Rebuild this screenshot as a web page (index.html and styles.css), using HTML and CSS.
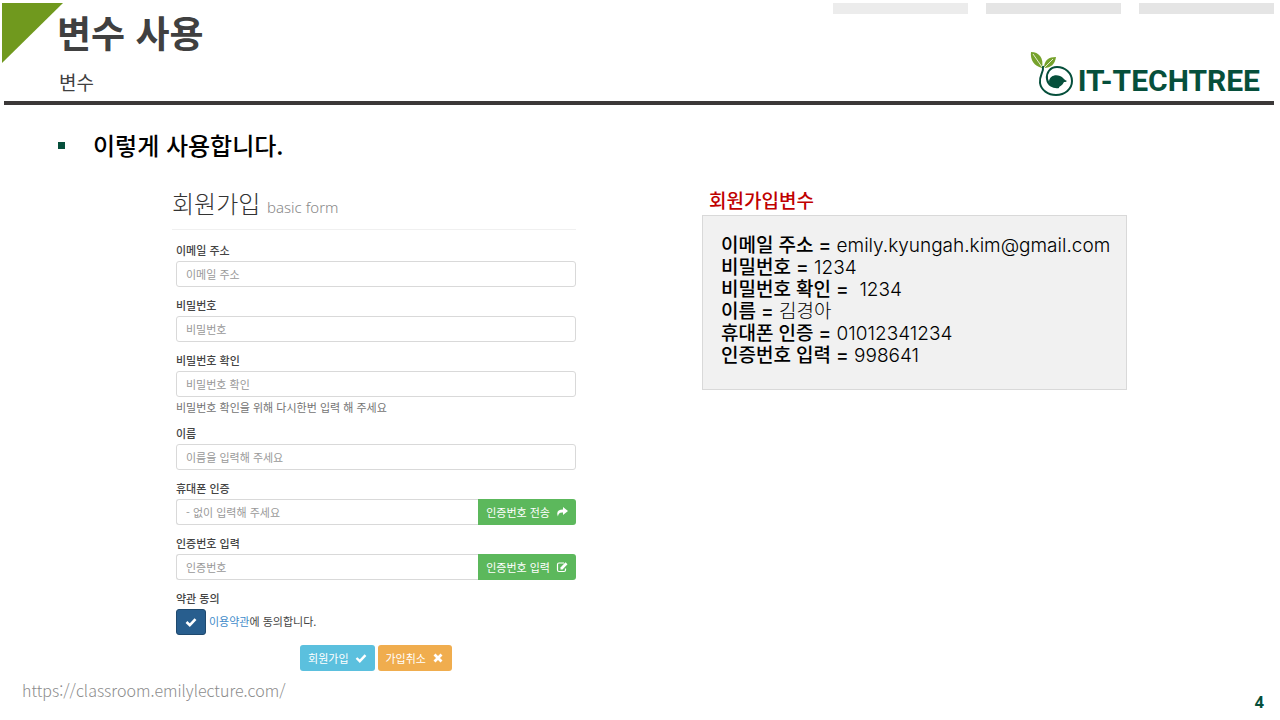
FILE: index.html
```html
<!DOCTYPE html>
<html lang="ko">

<head>
  <meta charset="UTF-8" />
  <meta name="viewport" content="width=device-width, initial-scale=1.0" />
  <title>변수 사용</title>
  <link rel="stylesheet" href="styles.css">
</head>

<body>
  <header class="slide-header">
    <div class="corner"></div>
    <div class="titles">
      <h1>변수 사용</h1>
      <p class="subtitle">변수</p>
    </div>
    <div class="brand">
      <div class="bars">
        <span class="bar bar-light"></span>
        <span class="bar"></span>
        <span class="bar"></span>
      </div>
      <div class="logo">
        <svg width="44" height="46" viewBox="0 0 44 46">
          <path d="M1 1C9 1 14 7 12 17C4 15 0 9 1 1Z" fill="#76a22c" />
          <path d="M14 17C14 9 19 6 26 6C25 13 21 17 14 17Z" fill="#76a22c" />
          <path d="M3 3L12 16M23 8L14 17" fill="none" stroke="#fff" stroke-width="0.8" />
          <path d="M13 15C14 22 9 24 10 32C11 39 18 44 26 44C35 44 42 38 42 30C42 22 35 16 27 16C20 16 16 22 17 28C18 34 23 37 29 36" fill="none" stroke="#064f3b" stroke-width="2" />
          <path d="M19 30C20 25 25 23 30 25C33 26 34 29 37 30C36 31 35 31 34 31C32 35 29 37 25 36C21 35 19 33 19 30Z" fill="#064f3b" />
        </svg>
        <span>IT-TECHTREE</span>
      </div>
    </div>
  </header>

  <main>
    <h2 class="bullet">이렇게 사용합니다.</h2>

    <div class="columns">
      <form class="join">
        <h3>회원가입 <small>basic form</small></h3>

        <div class="fields">
          <div class="group">
            <label for="email">이메일 주소</label>
            <input type="email" id="email" class="control" placeholder="이메일 주소" />
          </div>
          <div class="group">
            <label for="password">비밀번호</label>
            <input type="password" id="password" class="control" placeholder="비밀번호" />
          </div>
          <div class="group">
            <label for="password-check">비밀번호 확인</label>
            <input type="password" id="password-check" class="control" placeholder="비밀번호 확인" />
            <p class="help">비밀번호 확인을 위해 다시한번 입력 해 주세요</p>
          </div>
          <div class="group">
            <label for="username">이름</label>
            <input type="text" id="username" class="control" placeholder="이름을 입력해 주세요" />
          </div>
          <div class="group">
            <label for="phone">휴대폰 인증</label>
            <div class="input-group">
              <input type="tel" id="phone" class="control" placeholder="- 없이 입력해 주세요" />
              <button type="button" class="btn btn-success">인증번호 전송
                <svg width="12" height="12" viewBox="0 0 12 12"><path d="M7 1L12 5L7 9V6.500C4 6.500 2.500 7 2 10.500C0 6 2 3.500 7 3.500Z" fill="#fff" /></svg>
              </button>
            </div>
          </div>
          <div class="group">
            <label for="code">인증번호 입력</label>
            <div class="input-group">
              <input type="text" id="code" class="control" placeholder="인증번호" />
              <button type="button" class="btn btn-success">인증번호 입력
                <svg width="12" height="12" viewBox="0 0 12 12"><path d="M8 2H3Q1.500 2 1.500 3.500V9Q1.500 10.500 3 10.500H8Q9.500 10.500 9.500 9V7.500" fill="none" stroke="#fff" stroke-width="1.200" /><path d="M4.500 8.500V6.500L9.500 1.200L11.500 3.200L6.500 8.500Z" fill="#fff" /></svg>
              </button>
            </div>
          </div>
          <div class="group">
            <label for="agree">약관 동의</label>
            <div class="agree">
              <span class="check">
                <input type="checkbox" id="agree" checked />
                <svg width="12" height="12" viewBox="0 0 12 12"><path d="M1.500 6L4.800 9.200L10.500 3.200" fill="none" stroke="#fff" stroke-width="2.600" /></svg>
              </span>
              <p><a href="#">이용약관</a>에 동의합니다.</p>
            </div>
          </div>
        </div>

        <div class="actions">
          <button type="submit" class="btn btn-info">회원가입
            <svg width="12" height="12" viewBox="0 0 12 12"><path d="M1.500 6L4.800 9.200L10.500 3.200" fill="none" stroke="#fff" stroke-width="2.400" /></svg>
          </button>
          <button type="reset" class="btn btn-warning">가입취소
            <svg width="12" height="12" viewBox="0 0 12 12"><path d="M2.500 2.500L9.500 9.500M9.500 2.500L2.500 9.500" fill="none" stroke="#fff" stroke-width="2.800" /></svg>
          </button>
        </div>
      </form>

      <section class="variables">
        <h3>회원가입변수</h3>
        <ul>
          <li><b>이메일 주소 =</b> emily.kyungah.kim@gmail.com</li>
          <li><b>비밀번호 =</b> 1234</li>
          <li><b>비밀번호 확인 =</b> &nbsp;1234</li>
          <li><b>이름 =</b> 김경아</li>
          <li><b>휴대폰 인증 =</b> 01012341234</li>
          <li><b>인증번호 입력 =</b> 998641</li>
        </ul>
      </section>
    </div>
  </main>

  <footer>
    <span class="url">https://classroom.emilylecture.com/</span>
    <span class="page">4</span>
  </footer>
</body>

</html>
```
FILE: styles.css
```css
* {
  box-sizing: border-box;
}

body {
  margin: 0;
  min-height: 100vh;
  display: flex;
  flex-direction: column;
  background: #fff;
  color: #000;
  font-family: "Noto Sans CJK KR", sans-serif;
}

h1, h2, h3, p, ul {
  margin: 0;
  padding: 0;
}

/* header */
.slide-header {
  position: relative;
  display: flex;
  justify-content: space-between;
  margin: 0 6px 0 4px;
  padding-top: 3px;
  border-bottom: 4px solid #3b3838;
}

.corner {
  position: absolute;
  top: 3px;
  left: -2px;
  width: 61px;
  height: 60px;
  background: #70991e;
  clip-path: polygon(0 0, 100% 0, 0 100%);
}

.titles {
  position: relative;
  padding-left: 53px;
  color: #404040;
}

h1 {
  font-size: 37px;
  line-height: 58px;
  font-weight: 700;
}

.subtitle {
  padding: 7px 0 5px 2px;
  font-size: 19px;
  line-height: 28px;
}

.brand {
  display: flex;
  flex-direction: column;
  justify-content: space-between;
  align-items: flex-end;
}

.bars {
  display: flex;
  gap: 18px;
}

.bar {
  width: 135px;
  height: 11px;
  background: #e5e5e5;
}

.bar-light {
  background: #ececec;
}

.logo {
  display: flex;
  align-items: center;
  gap: 4px;
  padding: 0 14px 4px 0;
  color: #064f3b;
  font-family: Roboto, sans-serif;
  font-size: 30px;
  font-weight: 700;
}

.logo span {
  padding-top: 14px;
  line-height: 32px;
}

/* content */
main {
  flex: 1;
}

.bullet {
  display: flex;
  align-items: center;
  gap: 28px;
  padding: 22px 0 0 58px;
  font-size: 24px;
  line-height: 36px;
  font-weight: 500;
}

.bullet::before {
  content: "";
  width: 7px;
  height: 7px;
  background: #064f3b;
}

.columns {
  display: grid;
  grid-template-columns: 404fr 425fr;
  gap: 126px;
  align-items: start;
  padding: 22px 153px 0 172px;
}

/* join form */
.join {
  color: #444;
  font-size: 11px;
}

.join h3 {
  padding-bottom: 4px;
  border-bottom: 1px solid #f0f0f0;
  color: #333;
  font-size: 24px;
  line-height: 36px;
  font-weight: 300;
}

.join small {
  color: #888;
  font-family: "Noto Sans", sans-serif;
  font-size: 15px;
}

.fields {
  padding: 12px 0 0 4px;
}

.group {
  margin-bottom: 10px;
}

.group label {
  display: block;
  margin-bottom: 3px;
  line-height: 16px;
  font-weight: 500;
}

.control {
  display: block;
  width: 100%;
  height: 26px;
  padding: 0 9px;
  border: 1px solid #d9d9d9;
  border-radius: 3px;
  background: #fff;
  font-family: inherit;
  font-size: 11px;
}

.control::placeholder {
  color: #999;
}

.help {
  padding-top: 2px;
  color: #737373;
  line-height: 16px;
}

.input-group {
  display: flex;
}

.input-group .control {
  flex: 1;
  border-right: 0;
  border-radius: 3px 0 0 3px;
}

.btn {
  display: flex;
  align-items: center;
  gap: 6px;
  height: 26px;
  padding: 0 8px;
  border: 0;
  border-radius: 3px;
  color: #fff;
  font-family: inherit;
  font-size: 11px;
  white-space: nowrap;
  cursor: pointer;
}

.btn-success {
  border-radius: 0 3px 3px 0;
  background: #5cb85c;
}

.btn-info {
  background: #5bc0de;
}

.btn-warning {
  background: #f0ad4e;
}

.agree {
  display: flex;
  gap: 3px;
  line-height: 24px;
}

.agree a {
  color: #428bca;
  text-decoration: none;
}

.check {
  display: grid;
  place-items: center;
}

.check input,
.check svg {
  grid-area: 1 / 1;
}

.check svg {
  pointer-events: none;
}

.check input {
  appearance: none;
  width: 30px;
  height: 26px;
  margin: 0;
  border: 1px solid #1f496e;
  border-radius: 3px;
  background: #285e8e;
}

.actions {
  display: flex;
  justify-content: center;
  gap: 3px;
  padding-left: 4px;
}

/* variable list */
.variables h3 {
  padding-left: 7px;
  color: #c00000;
  font-size: 19px;
  line-height: 30px;
  font-weight: 500;
}

.variables ul {
  padding: 19px 8px 19px 18px;
  min-height: 175px;
  border: 1px solid #d9d9d9;
  background: #f1f1f1;
  list-style: none;
  font-family: Inter, "Noto Sans CJK KR", sans-serif;
  font-size: 19px;
  line-height: 22px;
  font-weight: 300;
}

.variables b {
  font-weight: 500;
}

/* footer */
footer {
  display: flex;
  justify-content: space-between;
  padding: 0 16px 6px 22px;
}

.url {
  color: #8b8b8b;
  font-size: 16px;
  line-height: 24px;
  font-weight: 300;
}

.page {
  padding-top: 12px;
  color: #064f3b;
  font-family: "Noto Sans", sans-serif;
  font-size: 16px;
  line-height: 24px;
  font-weight: 700;
}
```
